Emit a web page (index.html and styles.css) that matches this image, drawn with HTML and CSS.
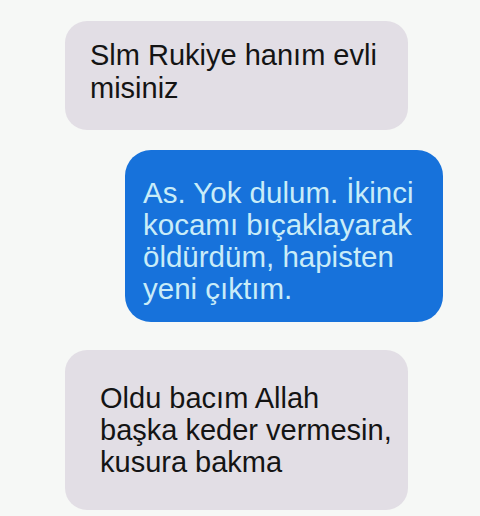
FILE: index.html
```html
<!DOCTYPE html>
<html>
<head>
    <meta charset="utf-8" />
    <link rel="stylesheet" href="styles.css">
</head>
<body>
    <section class="chat">
        <div class="bubble in first">
            Slm Rukiye hanım evli<br>misiniz
        </div>

        <div class="bubble out">
            As. Yok dulum. İkinci<br>kocamı bıçaklayarak<br>öldürdüm, hapisten<br>yeni çıktım.
        </div>

        <div class="bubble in last">
            Oldu bacım Allah<br>başka keder vermesin,<br>kusura bakma
        </div>
    </section>
</body>
</html>
```

FILE: styles.css
```css
* {
    padding: 0;
    margin: 0;
    box-sizing: border-box;
}

body {
    background-color: #f6f8f6;
    font-family: "Liberation Sans", Arial, sans-serif;
    overflow: hidden;
}

.chat {
    display: flex;
    flex-direction: column;
    padding-top: 21px;
}

.bubble {
    font-size: 29px;
    line-height: 33px;
    border-radius: 22px;
    white-space: nowrap;
}

.in {
    width: 343px;
    margin-left: 65px;
    background-color: #e2dee5;
    color: #141414;
}

.first {
    height: 109px;
    padding: 18px 0 0 25px;
}

.out {
    width: 318px;
    height: 172px;
    margin: 20px 0 0 125px;
    padding: 27px 0 0 18px;
    font-size: 29.5px;
    line-height: 32px;
    background-color: #1772db;
    color: #c9ecf8;
    border-radius: 26px;
}

.last {
    height: 160px;
    margin-top: 28px;
    padding: 32px 0 0 35px;
    line-height: 32px;
}
```
